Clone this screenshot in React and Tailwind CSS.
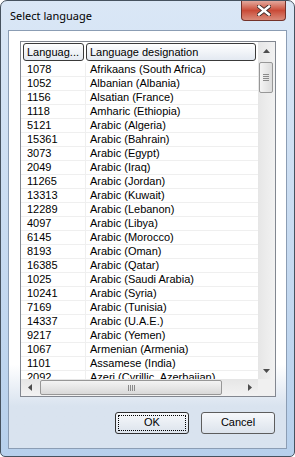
import React from 'react';

const rows = [
  ['1078', 'Afrikaans (South Africa)'],
  ['1052', 'Albanian (Albania)'],
  ['1156', 'Alsatian (France)'],
  ['1118', 'Amharic (Ethiopia)'],
  ['5121', 'Arabic (Algeria)'],
  ['15361', 'Arabic (Bahrain)'],
  ['3073', 'Arabic (Egypt)'],
  ['2049', 'Arabic (Iraq)'],
  ['11265', 'Arabic (Jordan)'],
  ['13313', 'Arabic (Kuwait)'],
  ['12289', 'Arabic (Lebanon)'],
  ['4097', 'Arabic (Libya)'],
  ['6145', 'Arabic (Morocco)'],
  ['8193', 'Arabic (Oman)'],
  ['16385', 'Arabic (Qatar)'],
  ['1025', 'Arabic (Saudi Arabia)'],
  ['10241', 'Arabic (Syria)'],
  ['7169', 'Arabic (Tunisia)'],
  ['14337', 'Arabic (U.A.E.)'],
  ['9217', 'Arabic (Yemen)'],
  ['1067', 'Armenian (Armenia)'],
  ['1101', 'Assamese (India)'],
  ['2092', 'Azeri (Cyrillic, Azerbaijan)'],
];

const Arrow = ({ dir }) => {
  const pts = {
    up: '0,4 3.5,0 7,4',
    down: '0,0 7,0 3.5,4',
    left: '4,0 4,7 0,3.5',
    right: '0,0 0,7 4,3.5',
  }[dir];
  const vertical = dir === 'up' || dir === 'down';
  return (
    <svg width={vertical ? 7 : 4} height={vertical ? 4 : 7} viewBox={vertical ? '0 0 7 4' : '0 0 4 7'}>
      <polygon points={pts} fill="#4d4d4d" />
    </svg>
  );
};

const CloseGlyph = () => (
  <svg width="14" height="11" viewBox="0 0 14 11">
    <path d="M2 1.5 L12 9.5 M12 1.5 L2 9.5" stroke="#3b2a28" strokeWidth="4.2" strokeLinecap="square" />
    <path d="M2 1.5 L12 9.5 M12 1.5 L2 9.5" stroke="#ffffff" strokeWidth="2.4" strokeLinecap="square" />
  </svg>
);

export default function App() {
  return (
    <div className="w-[295px] h-[457px] flex flex-col px-[7px] pb-[7px] rounded-t-[7px] rounded-b-[5px] border border-[#46525f] bg-linear-to-b from-[#dae7f6] to-[#b7d0ec] font-['Liberation_Sans',Arial,sans-serif] text-[11px] text-black overflow-hidden">
      {/* Title bar */}
      <div className="h-[29px] flex items-start justify-between shrink-0">
        <span className="mt-[7px] pl-[2px] leading-[16px] text-[11px] font-['Noto_Sans',sans-serif] text-black">
          Select language
        </span>
        <div className="w-[45px] h-[20px] mr-[1px] rounded-b-[4px] border border-t-0 border-[#74322a] bg-linear-to-b from-[#e2a89d] via-[#c94a37] to-[#d98a7a] flex items-center justify-center">
          <CloseGlyph />
        </div>
      </div>

      {/* Client area */}
      <div className="flex-1 flex flex-col border border-[#8b9db4] bg-linear-to-b from-white from-[80%] to-[#d9e3ef] to-[90%]">
        {/* List view */}
        <div className="ml-[11px] mr-[10px] mt-[10px] h-[356px] shrink-0 flex flex-col border border-[#828790] bg-white">
          <div className="flex flex-1 min-h-0">
            <div className="flex-1 min-w-0 overflow-hidden">
              <div className="h-[21px] flex items-start pt-[1px] gap-[2px] pl-[2px]">
                <div className="w-[61px] h-[18px] flex items-center pl-[3px] rounded-[3px] border border-[#3a3a3a] bg-linear-to-b from-white to-[#e3e9f1] whitespace-nowrap">
                  Languag...
                </div>
                <div className="w-[170px] h-[18px] flex items-center pl-[3px] rounded-[3px] border border-[#3a3a3a] bg-linear-to-b from-white to-[#e3e9f1] whitespace-nowrap">
                  Language designation
                </div>
              </div>
              {rows.map(([id, name]) => (
                <div key={id} className="h-[14px] flex items-center border-b border-[#efefef] leading-[13px]">
                  <div className="w-[65px] h-full flex items-center pl-[6px] border-r border-[#efefef]">{id}</div>
                  <div className="pl-[4px] whitespace-nowrap">{name}</div>
                </div>
              ))}
            </div>
            {/* Vertical scrollbar */}
            <div className="w-[17px] flex flex-col bg-linear-to-r from-[#e6e6e6] to-[#f2f2f2]">
              <div className="h-[17px] flex items-center justify-center">
                <Arrow dir="up" />
              </div>
              <div className="flex-1 pt-[3px] pl-[1px] pr-[2px]">
                <div className="h-[31px] rounded-[2px] border border-[#979797] bg-linear-to-r from-[#f4f4f4] to-[#dcdcdc] flex flex-col items-center justify-center gap-[1px]">
                  <div className="w-[6px] h-[1px] bg-[#8a8a8a]" />
                  <div className="w-[6px] h-[1px] bg-[#8a8a8a]" />
                  <div className="w-[6px] h-[1px] bg-[#8a8a8a]" />
                  <div className="w-[6px] h-[1px] bg-[#8a8a8a]" />
                </div>
              </div>
              <div className="h-[17px] flex items-center justify-center">
                <Arrow dir="down" />
              </div>
            </div>
          </div>
          {/* Horizontal scrollbar */}
          <div className="h-[17px] flex shrink-0">
            <div className="flex-1 flex bg-linear-to-b from-[#e6e6e6] to-[#f2f2f2]">
              <div className="w-[17px] flex items-center justify-center">
                <Arrow dir="left" />
              </div>
              <div className="flex-1 py-[1px] pl-[2px] pr-[19px]">
                <div className="h-full rounded-[2px] border border-[#979797] bg-linear-to-b from-[#f4f4f4] to-[#d9d9d9] flex items-center justify-center gap-[1px]">
                  <div className="w-[1px] h-[6px] bg-[#8a8a8a]" />
                  <div className="w-[1px] h-[6px] bg-[#8a8a8a]" />
                  <div className="w-[1px] h-[6px] bg-[#8a8a8a]" />
                  <div className="w-[1px] h-[6px] bg-[#8a8a8a]" />
                </div>
              </div>
              <div className="w-[17px] flex items-center justify-center">
                <Arrow dir="right" />
              </div>
            </div>
            <div className="w-[17px] bg-[#f0f0f0]" />
          </div>
        </div>

        {/* Buttons */}
        <div className="flex-1 flex items-center justify-end gap-[12px] pr-[11px]">
          <button className="w-[74px] h-[22px] p-[2px] rounded-[3px] border border-[#303030] bg-linear-to-b from-[#f6f8fb] to-[#dce3ec]">
            <span className="w-full h-full flex items-center justify-center rounded-[1px] border border-dotted border-black">
              OK
            </span>
          </button>
          <button className="w-[74px] h-[22px] flex items-center justify-center rounded-[3px] border border-[#5d5d5d] bg-linear-to-b from-[#f6f8fb] to-[#dce3ec]">
            Cancel
          </button>
        </div>
      </div>
    </div>
  );
}
